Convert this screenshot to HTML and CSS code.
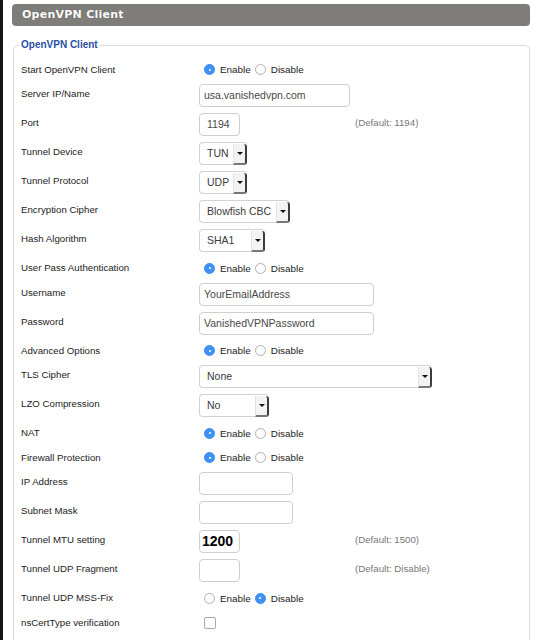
FILE: index.html
```html
<!DOCTYPE html>
<html>
<head>
<meta charset="utf-8">
<link rel="stylesheet" href="styles.css">
</head>
<body>
<div class="page">
  <div class="titlebar">OpenVPN Client</div>
  <fieldset class="panel">
    <legend class="legend">OpenVPN Client</legend>

    <div class="row r-radio">
      <span class="lbl">Start OpenVPN Client</span>
      <div class="radios"><span class="radio on"></span><span class="opt">Enable</span><span class="radio"></span><span class="opt">Disable</span></div>
    </div>
    <div class="row r-field">
      <span class="lbl">Server IP/Name</span>
      <div class="input w150">usa.vanishedvpn.com</div>
    </div>
    <div class="row r-field">
      <span class="lbl">Port</span>
      <div class="input w41 center">1194</div>
      <span class="note">(Default: 1194)</span>
    </div>
    <div class="row r-field">
      <span class="lbl">Tunnel Device</span>
      <div class="select w48"><span class="val">TUN</span><span class="btn"><span class="tri"></span></span></div>
    </div>
    <div class="row r-field">
      <span class="lbl">Tunnel Protocol</span>
      <div class="select w48"><span class="val">UDP</span><span class="btn"><span class="tri"></span></span></div>
    </div>
    <div class="row r-field">
      <span class="lbl">Encryption Cipher</span>
      <div class="select w91"><span class="val">Blowfish CBC</span><span class="btn"><span class="tri"></span></span></div>
    </div>
    <div class="row r-field">
      <span class="lbl">Hash Algorithm</span>
      <div class="select w66"><span class="val">SHA1</span><span class="btn"><span class="tri"></span></span></div>
    </div>
    <div class="row r-radio">
      <span class="lbl">User Pass Authentication</span>
      <div class="radios"><span class="radio on"></span><span class="opt">Enable</span><span class="radio"></span><span class="opt">Disable</span></div>
    </div>
    <div class="row r-field">
      <span class="lbl">Username</span>
      <div class="input w175">YourEmailAddress</div>
    </div>
    <div class="row r-field">
      <span class="lbl">Password</span>
      <div class="input w175">VanishedVPNPassword</div>
    </div>
    <div class="row r-radio">
      <span class="lbl">Advanced Options</span>
      <div class="radios"><span class="radio on"></span><span class="opt">Enable</span><span class="radio"></span><span class="opt">Disable</span></div>
    </div>
    <div class="row r-field">
      <span class="lbl">TLS Cipher</span>
      <div class="select w233"><span class="val">None</span><span class="btn"><span class="tri"></span></span></div>
    </div>
    <div class="row r-field">
      <span class="lbl">LZO Compression</span>
      <div class="select w70"><span class="val">No</span><span class="btn"><span class="tri"></span></span></div>
    </div>
    <div class="row r-radio">
      <span class="lbl">NAT</span>
      <div class="radios"><span class="radio on"></span><span class="opt">Enable</span><span class="radio"></span><span class="opt">Disable</span></div>
    </div>
    <div class="row r-radio">
      <span class="lbl">Firewall Protection</span>
      <div class="radios"><span class="radio on"></span><span class="opt">Enable</span><span class="radio"></span><span class="opt">Disable</span></div>
    </div>
    <div class="row r-field">
      <span class="lbl">IP Address</span>
      <div class="input w94"></div>
    </div>
    <div class="row r-field">
      <span class="lbl">Subnet Mask</span>
      <div class="input w94"></div>
    </div>
    <div class="row r-field">
      <span class="lbl">Tunnel MTU setting</span>
      <div class="input w41 big">1200</div>
      <span class="note">(Default: 1500)</span>
    </div>
    <div class="row r-field">
      <span class="lbl">Tunnel UDP Fragment</span>
      <div class="input w41"></div>
      <span class="note">(Default: Disable)</span>
    </div>
    <div class="row r-radio">
      <span class="lbl">Tunnel UDP MSS-Fix</span>
      <div class="radios"><span class="radio"></span><span class="opt">Enable</span><span class="radio on"></span><span class="opt">Disable</span></div>
    </div>
    <div class="row r-radio">
      <span class="lbl">nsCertType verification</span>
      <div class="radios"><span class="check"></span></div>
    </div>
  </fieldset>
</div>
</body>
</html>
```

FILE: styles.css
```css
html, body {
  margin: 0;
  padding: 0;
  background: #fff;
}
body {
  font-family: "Liberation Sans", Arial, sans-serif;
  color: #222;
  overflow: hidden;
}
.page {
  border-left: 3px solid #151515;
  min-height: 640px;
  box-sizing: border-box;
  padding: 4px 8px 0 9px;
}
.titlebar {
  height: 22px;
  line-height: 22px;
  background: #7f7d7a;
  border-radius: 4px;
  color: #fff;
  font-family: "DejaVu Sans", Verdana, sans-serif;
  font-weight: bold;
  font-size: 11px;
  letter-spacing: 0.25px;
  padding-left: 10px;
  text-shadow: 0 0 1px rgba(0,0,0,0.35);
}
.panel {
  margin: 13px 0 0 1px;
  border: 1px solid #dcdcdc;
  border-radius: 5px;
  padding: 8.5px 7px 20px 7px;
  min-width: 0;
}
.legend {
  font-family: "Liberation Sans", Arial, sans-serif;
  font-weight: bold;
  font-size: 10px;
  line-height: 12px;
  color: #2a4fa5;
  padding: 0 2px;
  margin-left: -2px;
}
.row {
  display: grid;
  grid-template-columns: 178px 156px auto;
  align-items: start;
}
.r-radio { height: 24.5px; }
.r-field { height: 29px; }
.lbl {
  font-size: 9.7px;
  line-height: 20px;
  color: #222;
}
.note {
  font-size: 9.7px;
  line-height: 20px;
  color: #777;
}
.radios {
  display: flex;
  align-items: center;
  height: 20px;
  padding-left: 5px;
}
.radio {
  width: 11px;
  height: 11px;
  box-sizing: border-box;
  border: 1px solid #b0b0b0;
  border-radius: 50%;
  background: #fff;
  position: relative;
  flex: none;
}
.radio.on {
  border-color: #3a8ef3;
  background: #3f92f4;
}
.radio.on::after {
  content: "";
  position: absolute;
  left: 3.5px;
  top: 3.5px;
  width: 2px;
  height: 2px;
  border-radius: 50%;
  background: #fff;
}
.opt {
  font-size: 9.9px;
  color: #222;
  margin: 0 4px 0 5px;
}
.check {
  width: 10px;
  height: 10px;
  border: 1px solid #a8a8a8;
  border-radius: 2px;
  background: #fff;
}
.input {
  height: 23px;
  box-sizing: border-box;
  border: 1px solid #cfcfcf;
  border-radius: 4px;
  background: #fff;
  font-size: 10.5px;
  line-height: 21px;
  color: #484848;
  padding-left: 4px;
  white-space: nowrap;
  overflow: hidden;
}
.input.center { padding-left: 7px; }
.input.big {
  font-size: 14px;
  font-weight: bold;
  color: #000;
  padding-left: 2px;
}
.w41 { width: 41px; }
.w94 { width: 94px; }
.w150 { width: 151px; }
.w175 { width: 175px; }
.select {
  display: flex;
  height: 23px;
  box-sizing: border-box;
  border: 1px solid #d2d2d2;
  border-right: none;
  border-radius: 4px;
  background: #fff;
  font-size: 10.5px;
  color: #3a3a3a;
}
.select .val {
  flex: 1;
  line-height: 21px;
  padding-left: 7px;
  white-space: nowrap;
  overflow: hidden;
}
.select .btn {
  width: 11px;
  flex: none;
  margin: 1px 0 -1px 0;
  background: #f3f3f3;
  border-left: 1px solid #e2e2e2;
  border-right: 2px solid #3c3c3c;
  border-bottom: 2px solid #777;
  border-radius: 0 3px 3px 0;
  display: flex;
  align-items: center;
  justify-content: center;
}
.tri {
  width: 0;
  height: 0;
  border-left: 3px solid transparent;
  border-right: 3px solid transparent;
  border-top: 3px solid #111;
}
.w48 { width: 48px; }
.w66 { width: 66px; }
.w70 { width: 70px; }
.w91 { width: 91px; }
.w233 { width: 233px; }
```
